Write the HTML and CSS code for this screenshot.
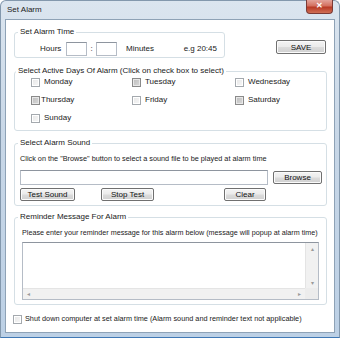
FILE: index.html
```html
<!doctype html>
<html lang="en">
  <head>
    <meta charset="UTF-8" />
    <title>Set Alarm</title>
    <link rel="stylesheet" href="styles.css">
  </head>
  <body>
    <div class="window">
      <div class="titlebar">
        <span class="title">Set Alarm</span>
        <span class="close-btn">&#x2715;</span>
      </div>

      <div class="client">
        <!-- time -->
        <div class="time-row">
          <fieldset class="group group-time">
            <legend>Set Alarm Time</legend>
            <div class="time-fields">
              <span class="lbl-hours">Hours</span>
              <span class="input input-small"></span>
              <span class="colon">:</span>
              <span class="input input-small"></span>
              <span class="lbl-minutes">Minutes</span>
              <span class="hint">e.g 20:45</span>
            </div>
          </fieldset>
          <button class="btn btn-save">SAVE</button>
        </div>

        <!-- days -->
        <fieldset class="group group-days">
          <legend>Select Active Days Of Alarm (Click on check box to select)</legend>
          <div class="days">
            <label class="day"><span class="check"></span>Monday</label>
            <label class="day"><span class="check check-dark"></span>Tuesday</label>
            <label class="day"><span class="check"></span>Wednesday</label>
            <label class="day day-tight"><span class="check check-dark"></span>Thursday</label>
            <label class="day"><span class="check"></span>Friday</label>
            <label class="day"><span class="check check-dark"></span>Saturday</label>
            <label class="day"><span class="check"></span>Sunday</label>
          </div>
        </fieldset>

        <!-- sound -->
        <fieldset class="group group-sound">
          <legend>Select Alarm Sound</legend>
          <div class="sound-body">
            <p class="note">Click on the "Browse" button to select a sound file to be played at alarm time</p>
            <div class="file-row">
              <span class="input input-file"></span>
              <button class="btn btn-browse">Browse</button>
            </div>
            <div class="sound-actions">
              <button class="btn btn-test">Test Sound</button>
              <button class="btn btn-stop">Stop Test</button>
              <button class="btn btn-clear">Clear</button>
            </div>
          </div>
        </fieldset>

        <!-- reminder -->
        <fieldset class="group group-reminder">
          <legend>Reminder Message For Alarm</legend>
          <div class="reminder-body">
            <p class="note note-long">Please enter your reminder message for this alarm below (message will popup at alarm time)</p>
            <div class="memo">
              <div class="memo-text"></div>
              <div class="vscroll">
                <span class="arrow">&#x25B4;</span>
                <span class="arrow">&#x25BE;</span>
              </div>
              <div class="hscroll">
                <span class="arrow">&#x25C2;</span>
                <span class="arrow">&#x25B8;</span>
              </div>
              <div class="corner"></div>
            </div>
          </div>
        </fieldset>

        <label class="shutdown"><span class="check"></span>Shut down computer at set alarm time (Alarm sound and reminder text not applicable)</label>
      </div>
    </div>
  </body>
</html>
```

FILE: styles.css
```css
* {
  margin: 0;
  padding: 0;
  box-sizing: border-box;
}

body {
  font-family: 'Liberation Sans', Arial, sans-serif;
  font-size: 8px;
  line-height: 10px;
  color: #1a1a1a;
  background: #fff;
}

.window {
  width: 340px;
  height: 338px;
  border: 1px solid #8398ad;
  border-bottom-color: #3f78b5;
  border-radius: 6px 6px 0 0;
  background: linear-gradient(to bottom, #dbe5ef 0%, #c8d7e7 40%, #bcd0e5 100%);
  display: flex;
  flex-direction: column;
}

.titlebar {
  height: 18px;
  display: flex;
  align-items: flex-start;
  padding-left: 6px;
}

.title {
  margin-top: 4px;
  color: #222;
}

.close-btn {
  margin-left: auto;
  margin-right: 6px;
  margin-top: -1px;
  width: 27px;
  height: 14px;
  border: 1px solid #7b3a35;
  border-top: none;
  border-radius: 0 0 4px 4px;
  background: linear-gradient(to bottom, #e3a39a 0%, #d3705f 45%, #b93a25 55%, #cf6f55 100%);
  color: #fff;
  font-size: 8px;
  line-height: 12px;
  text-align: center;
  font-weight: bold;
}

.client {
  flex: 1;
  margin: 0 4px 4px 4px;
  border: 1px solid #8ea2b6;
  background: #fff;
  padding: 7px 7px 0 8px;
  display: flex;
  flex-direction: column;
}

/* group boxes */
.group {
  border: 1px solid #d5dfe5;
  border-radius: 3px;
  min-width: 0;
}

.group legend {
  padding: 0 2px;
  margin-left: 3px;
  line-height: 10px;
}

.time-row {
  display: flex;
  align-items: flex-start;
}

.group-time {
  width: 211px;
  padding: 5px 0 2px 0;
}

.time-fields {
  display: flex;
  align-items: center;
  height: 13px;
  padding-left: 25px;
}

.lbl-hours {
  width: 26px;
}

.input {
  display: block;
  background: #fff;
  border: 1px solid #b5bcc6;
  border-top-color: #8e959f;
}

.input-small {
  width: 21px;
  height: 14px;
}

.colon {
  width: 9px;
  text-align: center;
}

.lbl-minutes {
  margin-left: 9px;
}

.hint {
  margin-left: auto;
  margin-right: 7px;
}

.btn {
  font-family: inherit;
  font-size: 8px;
  line-height: 11px;
  color: #111;
  border: 1px solid #707070;
  border-radius: 2px;
  background: linear-gradient(to bottom, #f4f4f4 0%, #ebebeb 48%, #dcdcdc 52%, #d0d0d0 100%);
  box-shadow: inset 0 0 0 1px #fbfbfb;
  height: 13px;
}

.btn-save {
  margin-left: auto;
  margin-right: 1px;
  margin-top: 13px;
  width: 50px;
  height: 14px;
}

/* days */
.group-days {
  margin-top: 8px;
  padding: 0 0 6px 0;
}

.group-days legend {
  margin-left: 1px;
}

.days {
  display: grid;
  grid-template-columns: 101px 103px auto;
  grid-auto-rows: 12px;
  row-gap: 6px;
  padding-left: 16px;
}

.day {
  display: flex;
  align-items: center;
}

.check {
  display: inline-block;
  flex-shrink: 0;
  width: 9px;
  height: 9px;
  margin-right: 4px;
  border: 1px solid #a4a9ae;
  background: linear-gradient(135deg, #e6e6e6 0%, #f8f8f8 100%);
  box-shadow: inset 0 0 0 1px #fff;
}

.check-dark {
  border-color: #8a8a8a;
  background: linear-gradient(135deg, #bdbdbd 0%, #d9d9d9 100%);
  box-shadow: inset 0 0 0 1px #e8e8e8;
}

.day-tight .check {
  margin-right: 1px;
}

/* sound */
.group-sound {
  margin-top: 7px;
  padding: 6px 0 4px 0;
}

.sound-body {
  padding: 0 4px 0 5px;
}

.note {
  font-size: 7.3px;
  line-height: 10px;
  white-space: nowrap;
}

.note-long {
  font-size: 7.2px;
}

.file-row {
  display: flex;
  align-items: center;
  margin-top: 6px;
}

.input-file {
  width: 248px;
  height: 15px;
}

.btn-browse {
  margin-left: auto;
  width: 49px;
}

.sound-actions {
  display: flex;
  margin-top: 3px;
}

.btn-test {
  width: 55px;
}

.btn-stop {
  width: 53px;
  margin-left: 26px;
}

.btn-clear {
  width: 42px;
  margin-left: 70px;
}

/* reminder */
.group-reminder {
  margin-top: 6px;
  padding: 6px 0 4px 0;
}

.reminder-body {
  padding: 0 7px;
}

.memo {
  margin-top: 4px;
  height: 58px;
  border: 1px solid #b5bcc6;
  border-top-color: #8e959f;
  display: grid;
  grid-template-columns: 1fr 13px;
  grid-template-rows: 1fr 11px;
}

.vscroll,
.hscroll,
.corner {
  background: #f1f1f1;
  color: #9a9a9a;
  font-size: 6px;
}

.vscroll {
  display: flex;
  flex-direction: column;
  justify-content: space-between;
  align-items: center;
  padding: 2px 0 1px;
  border-left: 1px solid #e4e4e4;
}

.hscroll {
  display: flex;
  justify-content: space-between;
  align-items: center;
  padding: 0 4px;
  border-top: 1px solid #e4e4e4;
}

.corner {
  background: #ececec;
}

.arrow {
  line-height: 8px;
}

/* shutdown */
.shutdown {
  margin-top: 9px;
  margin-left: -1px;
  display: flex;
  align-items: center;
  font-size: 7.3px;
  white-space: nowrap;
}

.shutdown .check {
  margin-right: 3px;
}
```
